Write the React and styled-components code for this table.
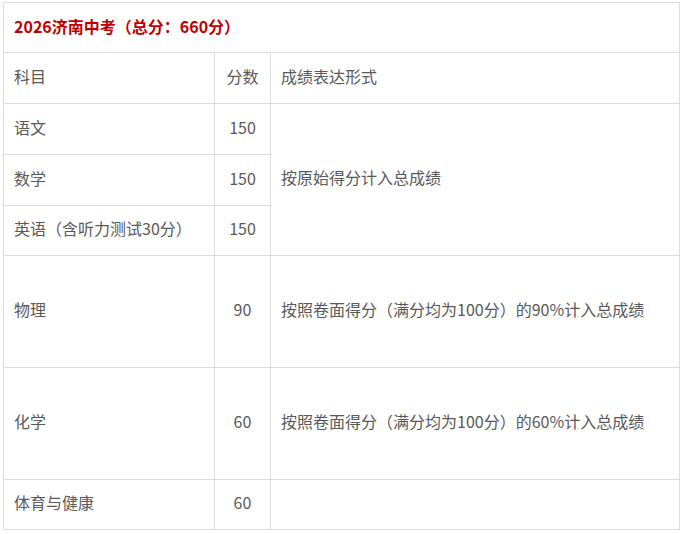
import React from "react";
import styled, { createGlobalStyle } from "styled-components";

const GlobalStyle = createGlobalStyle`
  html, body {
    margin: 0;
    padding: 0;
    background: #fff;
  }
  body {
    font-family: "Noto Sans CJK SC", "Noto Sans", "Liberation Sans", sans-serif;
  }
`;

const Page = styled.div`
  padding: 2px 3px;
`;

const Table = styled.table`
  width: 677px;
  border-collapse: collapse;
  table-layout: fixed;
  color: #595959;
  font-size: 16px;
`;

const Row = styled.tr`
  height: ${(props) => props.$h}px;
`;

const Cell = styled.td`
  border: 1px solid #dcdcdc;
  padding: 0 10px 4px 10px;
  vertical-align: middle;
  text-align: ${(props) => (props.$center ? "center" : "left")};
  line-height: 1.4;
  white-space: nowrap;
`;

const Title = styled.td`
  border: 1px solid #dcdcdc;
  padding: 0 10px 4px 10px;
  vertical-align: middle;
  color: #bf0000;
  font-weight: 700;
`;

const ROWS = [
  { name: "语文", score: "150", h: 51 },
  { name: "数学", score: "150", h: 51 },
  { name: "英语（含听力测试30分）", score: "150", h: 50 },
];

export default function App() {
  return (
    <Page>
      <GlobalStyle />
      <Table>
        <colgroup>
          <col style={{ width: 211 }} />
          <col style={{ width: 56 }} />
          <col />
        </colgroup>
        <tbody>
          <Row $h={50}>
            <Title colSpan={3}>2026济南中考（总分：660分）</Title>
          </Row>
          <Row $h={51}>
            <Cell>科目</Cell>
            <Cell $center>分数</Cell>
            <Cell>成绩表达形式</Cell>
          </Row>
          {ROWS.map((r, i) => (
            <Row $h={r.h} key={r.name}>
              <Cell>{r.name}</Cell>
              <Cell $center>{r.score}</Cell>
              {i === 0 && <Cell rowSpan={3}>按原始得分计入总成绩</Cell>}
            </Row>
          ))}
          <Row $h={112}>
            <Cell>物理</Cell>
            <Cell $center>90</Cell>
            <Cell>按照卷面得分（满分均为100分）的90%计入总成绩</Cell>
          </Row>
          <Row $h={112}>
            <Cell>化学</Cell>
            <Cell $center>60</Cell>
            <Cell>按照卷面得分（满分均为100分）的60%计入总成绩</Cell>
          </Row>
          <Row $h={50}>
            <Cell>体育与健康</Cell>
            <Cell $center>60</Cell>
            <Cell></Cell>
          </Row>
        </tbody>
      </Table>
    </Page>
  );
}
